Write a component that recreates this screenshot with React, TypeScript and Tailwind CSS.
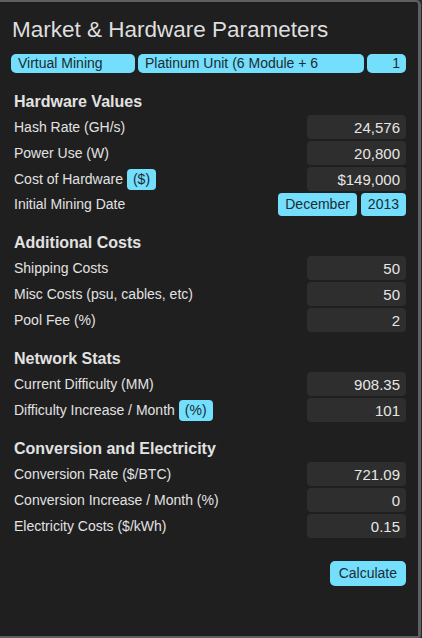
const sections = [
  {
    title: "Hardware Values",
    rows: [
      { label: "Hash Rate (GH/s)", value: "24,576" },
      { label: "Power Use (W)", value: "20,800" },
      { label: "Cost of Hardware", badge: "($)", value: "$149,000" },
      { label: "Initial Mining Date", date: ["December", "2013"] },
    ],
  },
  {
    title: "Additional Costs",
    rows: [
      { label: "Shipping Costs", value: "50" },
      { label: "Misc Costs (psu, cables, etc)", value: "50" },
      { label: "Pool Fee (%)", value: "2" },
    ],
  },
  {
    title: "Network Stats",
    rows: [
      { label: "Current Difficulty (MM)", value: "908.35" },
      { label: "Difficulty Increase / Month", badge: "(%)", value: "101" },
    ],
  },
  {
    title: "Conversion and Electricity",
    rows: [
      { label: "Conversion Rate ($/BTC)", value: "721.09" },
      { label: "Conversion Increase / Month (%)", value: "0" },
      { label: "Electricity Costs ($/kWh)", value: "0.15" },
    ],
  },
];

type Row = {
  label: string;
  value?: string;
  badge?: string;
  date?: string[];
};

function FieldRow({ row }: { row: Row }) {
  return (
    <div className="flex items-center justify-between">
      <div className="flex items-center gap-[4px] text-[14px] text-[#e2e2e2]">
        <span>{row.label}</span>
        {row.badge && (
          <span className="rounded-[4px] bg-[#74dffc] text-[#1d2b33] px-[6px] h-[21px] flex items-center">
            {row.badge}
          </span>
        )}
      </div>
      {row.date ? (
        <div className="flex gap-[4px] text-[14px] text-[#1d2b33]">
          {row.date.map((d) => (
            <span
              key={d}
              className="rounded-[4px] bg-[#74dffc] px-[7px] h-[23px] flex items-center"
            >
              {d}
            </span>
          ))}
        </div>
      ) : (
        <input
          readOnly
          value={row.value}
          className="w-[99px] h-[24px] rounded-[4px] bg-[#2e2e2e] text-right pr-[6px] text-[15px] text-[#e6e6e6] outline-none"
        />
      )}
    </div>
  );
}

export default function App() {
  return (
    <div
      className="w-[422px] h-[638px] bg-[#2a2a2a] pr-[1px]"
      style={{ fontFamily: '"Liberation Sans", Arial, sans-serif' }}
    >
      <div className="h-full bg-[#1f1f1f] border-t-2 border-r-[3px] border-b-2 border-[#5d5f63] rounded-tr-[5px] rounded-br-[3px] pl-[11px] pr-[12px]">
        <h1 className="text-[22.5px] text-[#dedede] pt-[15px] pb-[11px] pl-[1px] leading-[26px]">
          Market &amp; Hardware Parameters
        </h1>
        <div className="flex gap-[3px] text-[14px] text-[#1d2b33]">
          <div className="w-[124px] h-[19px] rounded-[5px] bg-[#74dffc] flex items-center pl-[7px]">
            Virtual Mining
          </div>
          <div className="w-[226px] h-[19px] rounded-[5px] bg-[#74dffc] flex items-center pl-[7px] overflow-hidden whitespace-nowrap">
            Platinum Unit (6 Module + 6
          </div>
          <div className="flex-1 h-[19px] rounded-[5px] bg-[#74dffc] flex items-center justify-end pr-[6px]">
            1
          </div>
        </div>
        <div className="pl-[3px] pt-[18px] flex flex-col gap-[16px]">
          {sections.map((s) => (
            <div key={s.title}>
              <h2 className="text-[16px] font-bold text-[#e2e2e2] h-[21px] mb-[3px] flex items-center">
                {s.title}
              </h2>
              <div className="flex flex-col gap-[2px]">
                {s.rows.map((r) => (
                  <FieldRow key={r.label} row={r} />
                ))}
              </div>
            </div>
          ))}
          <div className="flex justify-end mt-[7px]">
            <button className="rounded-[5px] bg-[#74dffc] text-[#1d2b33] text-[14px] h-[25px] px-[9px]">
              Calculate
            </button>
          </div>
        </div>
      </div>
    </div>
  );
}
